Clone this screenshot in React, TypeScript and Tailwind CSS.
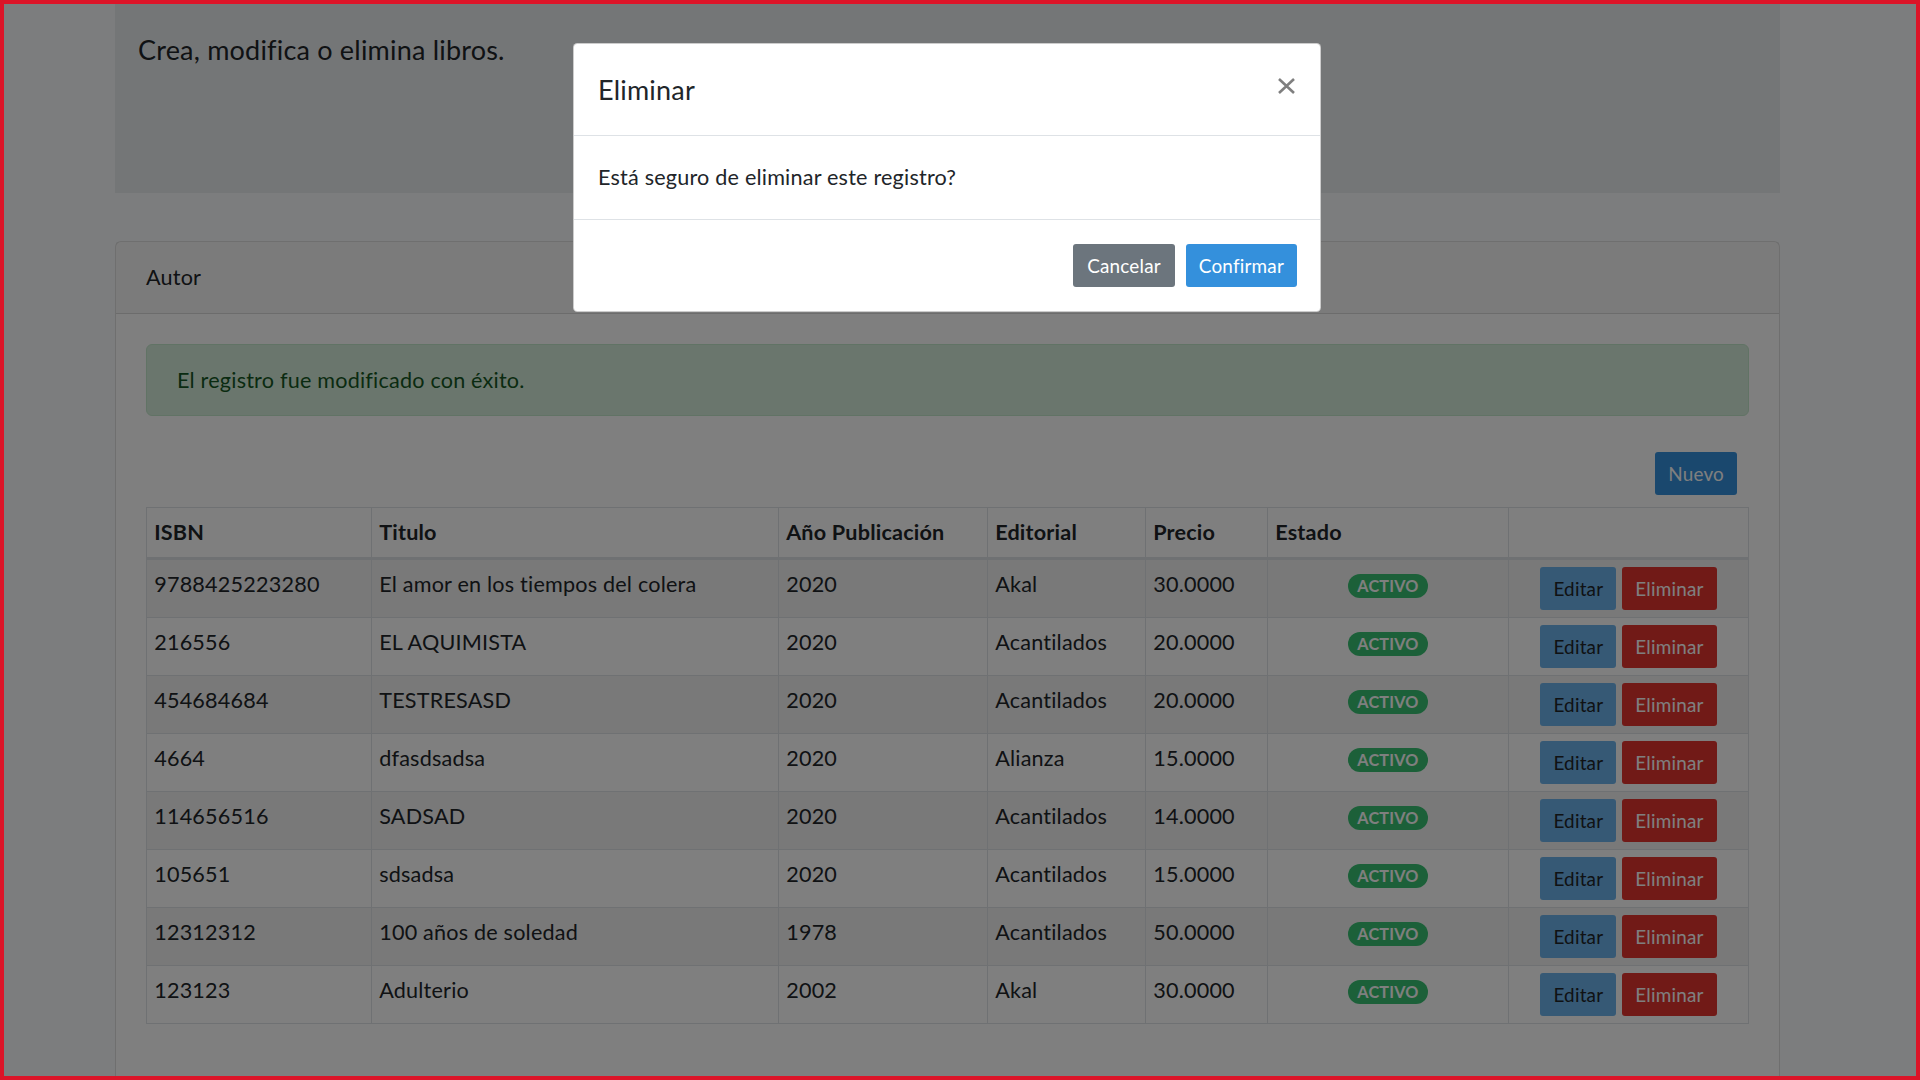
import React from "react";

type Libro = {
  isbn: string;
  titulo: string;
  anio: string;
  editorial: string;
  precio: string;
};

const libros: Libro[] = [
  { isbn: "9788425223280", titulo: "El amor en los tiempos del colera", anio: "2020", editorial: "Akal", precio: "30.0000" },
  { isbn: "216556", titulo: "EL AQUIMISTA", anio: "2020", editorial: "Acantilados", precio: "20.0000" },
  { isbn: "454684684", titulo: "TESTRESASD", anio: "2020", editorial: "Acantilados", precio: "20.0000" },
  { isbn: "4664", titulo: "dfasdsadsa", anio: "2020", editorial: "Alianza", precio: "15.0000" },
  { isbn: "114656516", titulo: "SADSAD", anio: "2020", editorial: "Acantilados", precio: "14.0000" },
  { isbn: "105651", titulo: "sdsadsa", anio: "2020", editorial: "Acantilados", precio: "15.0000" },
  { isbn: "12312312", titulo: "100 años de soledad", anio: "1978", editorial: "Acantilados", precio: "50.0000" },
  { isbn: "123123", titulo: "Adulterio", anio: "2002", editorial: "Akal", precio: "30.0000" },
];

const btnSm =
  "inline-block rounded-[3px] border border-transparent px-[12px] py-[6px] align-middle text-[18.9px] leading-[29px]";

const thClass = "border border-b-[3px] border-[#dee2e6] px-[7.2px] py-[7.2px] text-left align-bottom font-bold";
const tdClass = "border border-[#dee2e6] px-[7.2px] py-[7px] align-top";

function LibrosTable() {
  return (
    <table className="w-full table-fixed border-collapse">
      <colgroup>
        <col className="w-[225px]" />
        <col className="w-[407px]" />
        <col className="w-[209px]" />
        <col className="w-[158px]" />
        <col className="w-[122px]" />
        <col className="w-[241px]" />
        <col className="w-[240px]" />
      </colgroup>
      <thead>
        <tr>
          <th className={thClass}>ISBN</th>
          <th className={thClass}>Titulo</th>
          <th className={thClass}>Año Publicación</th>
          <th className={thClass}>Editorial</th>
          <th className={thClass}>Precio</th>
          <th className={thClass}>Estado</th>
          <th className={thClass}></th>
        </tr>
      </thead>
      <tbody>
        {libros.map((libro, i) => (
          <tr key={libro.isbn} className={i % 2 === 0 ? "bg-black/5" : ""}>
            <td className={tdClass}>{libro.isbn}</td>
            <td className={tdClass}>{libro.titulo}</td>
            <td className={tdClass}>{libro.anio}</td>
            <td className={tdClass}>{libro.editorial}</td>
            <td className={tdClass}>{libro.precio}</td>
            <td className={`${tdClass} text-center`}>
              <div className="flex h-[38px] items-center justify-center">
                <span className="inline-block rounded-full bg-[#38c172] px-[9.7px] py-[4px] text-[16.2px] leading-none font-bold text-white">
                  ACTIVO
                </span>
              </div>
            </td>
            <td className={tdClass}>
              <div className="flex justify-center gap-[6px]">
                <button type="button" className={`${btnSm} bg-[#6cb2eb] text-[#212529]`}>
                  Editar
                </button>
                <button type="button" className={`${btnSm} bg-[#e3342f] text-white`}>
                  Eliminar
                </button>
              </div>
            </td>
          </tr>
        ))}
      </tbody>
    </table>
  );
}

function EliminarModal() {
  return (
    <div className="absolute left-[573px] top-[43px] w-[748px] rounded-[4.5px] border border-black/20 bg-white text-[#212529]">
      <div className="flex items-start justify-between border-b border-[#dee2e6] p-[24px]">
        <h5 className="text-[27px] leading-[1.6]">Eliminar</h5>
        <button type="button" className="mt-[10px] mr-[1px] text-black/50">
          <svg width="17" height="16" viewBox="0 0 17 16" fill="none" stroke="currentColor" strokeWidth="2.6">
            <path d="M1 1 L16 15 M16 1 L1 15" />
          </svg>
        </button>
      </div>
      <div className="p-[24px]">Está seguro de eliminar este registro?</div>
      <div className="flex items-center justify-end border-t border-[#dee2e6] py-[18px] pr-[17px] pl-[18px]">
        <button type="button" className={`${btnSm} my-[6px] mr-[5.5px] bg-[#6c757d] px-[13px] text-white`}>
          Cancelar
        </button>
        <button type="button" className={`${btnSm} my-[6px] ml-[5.5px] mr-[6px] bg-[#3490dc] px-[12.5px] text-white`}>
          Confirmar
        </button>
      </div>
    </div>
  );
}

export default function App() {
  return (
    <div className="relative h-[1080px] w-full overflow-hidden bg-[#f8fafc] font-['Lato',sans-serif] text-[21.6px] leading-[1.6] tracking-[0.2px] text-[#212529]">
      <div className="w-[1895px]">
        <div className="mx-auto w-[1710px] px-[22.5px]">
          <div className="h-[193px] bg-[#e9ecef] px-[23px] pt-[28px]">
            <p className="text-[27px] leading-[1.6]">Crea, modifica o elimina libros.</p>
          </div>

          <div className="mt-[48px] rounded-[6px] border border-black/[0.125] bg-white">
            <div className="border-b border-black/[0.125] bg-black/[0.03] px-[30px] py-[18px]">Autor</div>
            <div className="p-[30px]">
              <div className="mb-[24px] rounded-[6px] border border-[#c3e6cb] bg-[#d4edda] px-[30px] py-[18px] text-[#155724]">
                El registro fue modificado con éxito.
              </div>
              <div className="flex justify-end pt-[12px] pr-[12px]">
                <button type="button" className={`${btnSm} bg-[#3490dc] text-white`}>
                  Nuevo
                </button>
              </div>
              <div className="mt-[12px]">
                <LibrosTable />
              </div>
              <div className="h-[120px]" />
            </div>
          </div>
        </div>
      </div>

      <div className="absolute inset-0 bg-black/50" />
      <EliminarModal />
      <div className="pointer-events-none absolute inset-0 border-4 border-[#dc1428]" />
    </div>
  );
}
